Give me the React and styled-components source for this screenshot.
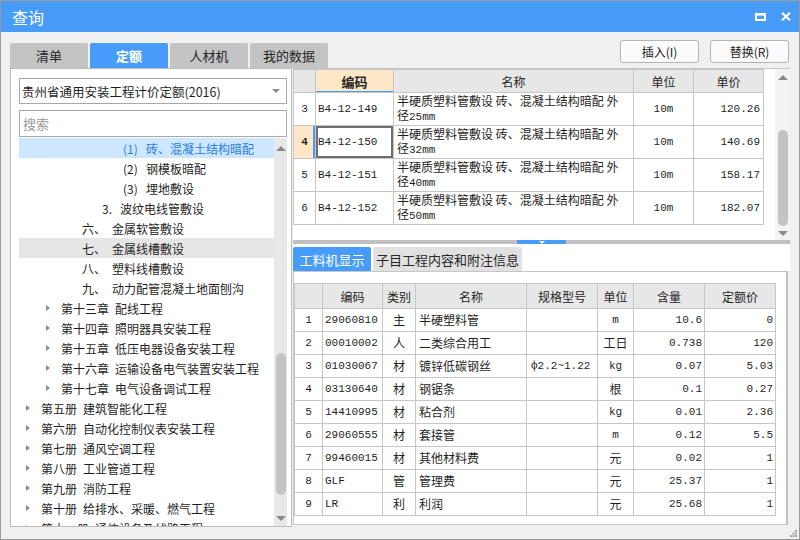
import React from 'react';
import styled, { createGlobalStyle } from 'styled-components';

const BLUE = '#469cf8';
const LINE = '#c6c6c6';
const MONO = '"Liberation Mono", "Noto Sans CJK SC", monospace';

const GlobalStyle = createGlobalStyle`
  html, body { margin: 0; padding: 0; background: #fff; }
  body {
    font-family: "Noto Sans CJK SC", "Noto Sans", sans-serif;
    font-size: 12px;
    color: #1f1f1f;
  }
  * { box-sizing: border-box; }
`;

const Window = styled.div`
  position: relative;
  width: 800px;
  height: 540px;
  border: 1px solid #9a9a9a;
  background: #f0f0f0;
  display: flex;
  flex-direction: column;
  overflow: hidden;
`;

const TitleBar = styled.div`
  flex: none;
  height: 31px;
  background: ${BLUE};
  color: #fff;
  display: flex;
  align-items: center;
  padding: 0 8px 0 11px;
`;

const Title = styled.div`
  flex: 1;
  font-size: 16px;
`;

const TitleIcons = styled.div`
  display: flex;
  align-items: center;
  gap: 15px;
`;

const Body = styled.div`
  flex: 1;
  min-height: 0;
  display: flex;
  flex-direction: column;
  padding: 8px 9px 12px 9px;
`;

const TopRow = styled.div`
  flex: none;
  height: 28px;
  display: flex;
`;

const Tabs = styled.div`
  display: flex;
  gap: 2px;
  align-self: flex-end;
`;

const Tab = styled.div`
  width: ${p => p.$w || 78}px;
  height: ${p => p.$h || 25}px;
  border-radius: 2px 2px 0 0;
  background: ${p => (p.$active ? BLUE : p.$bg || '#c4c4c4')};
  color: ${p => (p.$active ? '#fff' : '#262626')};
  font-weight: ${p => (p.$bold ? 700 : 400)};
  font-size: 13px;
  display: flex;
  align-items: center;
  justify-content: center;
`;

const Actions = styled.div`
  margin-left: auto;
  margin-right: 1px;
  display: flex;
  gap: 11px;
  align-self: flex-start;
`;

const Button = styled.button`
  width: 79px;
  height: 23px;
  border: 1px solid #b4b4b4;
  border-radius: 3px;
  background: #fbfbfb;
  font-family: inherit;
  font-size: 12px;
  color: #222;
  padding: 0;
`;

const Main = styled.div`
  flex: 1;
  min-height: 0;
  display: flex;
`;

const LeftPanel = styled.div`
  flex: none;
  width: 282px;
  background: #fff;
  border: 1px solid #bcbcbc;
  display: flex;
  flex-direction: column;
  padding: 9px 4px 0 8px;
`;

const Select = styled.div`
  flex: none;
  height: 26px;
  border: 1px solid #a8a8a8;
  display: flex;
  align-items: center;
  padding: 0 6px 0 2px;
  font-size: 12.5px;
  white-space: nowrap;
  span { flex: 1; }
  &::after {
    content: '';
    border-left: 4px solid transparent;
    border-right: 4px solid transparent;
    border-top: 4px solid #8a8a8a;
  }
`;

const Search = styled.div`
  flex: none;
  margin-top: 6px;
  height: 27px;
  border: 1px solid #a8a8a8;
  display: flex;
  align-items: center;
  padding-left: 3px;
  color: #9a9a9a;
  font-size: 13px;
`;

const Tree = styled.div`
  flex: 1;
  min-height: 0;
  margin-top: 1px;
  display: flex;
`;

const TreeList = styled.div`
  flex: 1;
  overflow: hidden;
`;

const TreeRow = styled.div`
  height: 20px;
  display: flex;
  align-items: center;
  white-space: nowrap;
  padding-left: ${p => p.$indent}px;
  background: ${p => (p.$selected ? '#cce7ff' : p.$hover ? '#e6e6e6' : 'transparent')};
  color: ${p => (p.$selected ? '#2b7de0' : '#1f1f1f')};
`;

const Expander = styled.span`
  flex: none;
  width: 15px;
  display: flex;
  align-items: center;
  &::before {
    content: '';
    border-top: 3.5px solid transparent;
    border-bottom: 3.5px solid transparent;
    border-left: 4px solid #8c8c8c;
  }
`;

const Prefix = styled.span`
  flex: none;
  min-width: ${p => p.$w}px;
`;

const ScrollBar = styled.div`
  flex: none;
  width: ${p => p.$w}px;
  background: ${p => p.$bg};
  display: flex;
  flex-direction: column;
  align-items: center;
`;

const ScrollArrow = styled.div`
  flex: none;
  width: 100%;
  height: ${p => p.$h}px;
  display: flex;
  align-items: center;
  justify-content: center;
  &::before {
    content: '';
    border-left: 5px solid transparent;
    border-right: 5px solid transparent;
    ${p => (p.$down ? 'border-top: 5px solid #8a8a8a;' : 'border-bottom: 5px solid #8a8a8a;')}
  }
`;

const ScrollBody = styled.div`
  flex: 1;
  width: 100%;
  display: flex;
  justify-content: center;
  padding-top: ${p => p.$offset}px;
`;

const Thumb = styled.div`
  width: 10px;
  height: ${p => p.$h}px;
  border-radius: 5px;
  background: #c3c3c3;
`;

const RightPanel = styled.div`
  flex: 1;
  min-width: 0;
  margin-left: 1px;
  display: flex;
  flex-direction: column;
`;

const TopArea = styled.div`
  flex: none;
  height: 172px;
  background: #fff;
  border-top: 1px solid ${LINE};
  display: flex;
`;

const GridWrap = styled.div`
  flex: 1;
  overflow: hidden;
`;

const Table = styled.table`
  border-collapse: collapse;
  table-layout: fixed;
  width: ${p => p.$w}px;
  font-size: 12px;
`;

const Th = styled.th`
  height: ${p => p.$h}px;
  border: 1px solid ${LINE};
  background: ${p => (p.$active ? '#fee7c6' : '#e7e7e7')};
  font-weight: ${p => (p.$active ? 700 : 400)};
  font-size: ${p => (p.$active ? 13 : 12)}px;
  color: #262626;
  padding: 0;
  box-shadow: ${p => (p.$active ? `inset 0 -1px 0 ${BLUE}` : 'none')};
`;

const Td = styled.td`
  height: ${p => p.$h}px;
  border: 1px solid ${LINE};
  padding: 0 ${p => p.$pr ?? 3}px 0 ${p => p.$pl ?? 3}px;
  text-align: ${p => p.$align || 'left'};
  font-family: ${p => (p.$mono ? MONO : 'inherit')};
  font-size: ${p => (p.$mono ? 11 : 12)}px;
  font-weight: ${p => (p.$bold ? 700 : 400)};
  line-height: 14px;
  background: ${p => (p.$mark ? '#fee7c6' : '#fff')};
  box-shadow: ${p => (p.$focus ? 'inset 0 0 0 2px #6f6f6f' : p.$mark ? `inset -2px 0 0 ${BLUE}` : 'none')};
  white-space: ${p => (p.$wrap ? 'normal' : 'nowrap')};
  overflow: hidden;
`;

const Size = styled.span`
  font-family: ${MONO};
  font-size: 11px;
`;

const Splitter = styled.div`
  flex: none;
  height: 4px;
  background: #c0c0c0;
  display: flex;
  justify-content: center;
`;

const SplitHandle = styled.div`
  width: 49px;
  background: ${BLUE};
  display: flex;
  justify-content: center;
  padding-top: 1px;
  &::before {
    content: '';
    border-left: 3px solid transparent;
    border-right: 3px solid transparent;
    border-top: 3px solid #fff;
  }
`;

const SubTabs = styled.div`
  flex: none;
  height: 27px;
  background: #fff;
  padding-top: 3px;
  display: flex;
  gap: 2px;
`;

const BottomPanel = styled.div`
  flex: 1;
  min-height: 0;
  background: #fff;
  border: 1px solid ${LINE};
  border-right: 2px solid #c2c2c2;
  margin: 0 2px 2px 0;
  padding-top: 11px;
  overflow: hidden;
`;

const Grip = styled.svg`
  position: absolute;
  right: 2px;
  bottom: 2px;
`;

const treeRows = [
  { indent: 104, prefix: '(1)', pw: 23, label: '砖、混凝土结构暗配', selected: true },
  { indent: 104, prefix: '(2)', pw: 23, label: '钢模板暗配' },
  { indent: 104, prefix: '(3)', pw: 23, label: '埋地敷设' },
  { indent: 83, prefix: '3.', pw: 18, label: '波纹电线管敷设' },
  { indent: 63, prefix: '六、', pw: 30, label: '金属软管敷设' },
  { indent: 63, prefix: '七、', pw: 30, label: '金属线槽敷设', hover: true },
  { indent: 63, prefix: '八、', pw: 30, label: '塑料线槽敷设' },
  { indent: 63, prefix: '九、', pw: 30, label: '动力配管混凝土地面刨沟' },
  { indent: 27, arrow: true, prefix: '第十三章', pw: 54, label: '配线工程' },
  { indent: 27, arrow: true, prefix: '第十四章', pw: 54, label: '照明器具安装工程' },
  { indent: 27, arrow: true, prefix: '第十五章', pw: 54, label: '低压电器设备安装工程' },
  { indent: 27, arrow: true, prefix: '第十六章', pw: 54, label: '运输设备电气装置安装工程' },
  { indent: 27, arrow: true, prefix: '第十七章', pw: 54, label: '电气设备调试工程' },
  { indent: 7, arrow: true, prefix: '第五册', pw: 42, label: '建筑智能化工程' },
  { indent: 7, arrow: true, prefix: '第六册', pw: 42, label: '自动化控制仪表安装工程' },
  { indent: 7, arrow: true, prefix: '第七册', pw: 42, label: '通风空调工程' },
  { indent: 7, arrow: true, prefix: '第八册', pw: 42, label: '工业管道工程' },
  { indent: 7, arrow: true, prefix: '第九册', pw: 42, label: '消防工程' },
  { indent: 7, arrow: true, prefix: '第十册', pw: 42, label: '给排水、采暖、燃气工程' },
  { indent: 7, arrow: true, prefix: '第十一册', pw: 54, label: '通信设备及线路工程' },
];

const quotaRows = [
  { no: 3, code: 'B4-12-149', size: '25mm', unit: '10m', price: '120.26' },
  { no: 4, code: 'B4-12-150', size: '32mm', unit: '10m', price: '140.69', selected: true },
  { no: 5, code: 'B4-12-151', size: '40mm', unit: '10m', price: '158.17' },
  { no: 6, code: 'B4-12-152', size: '50mm', unit: '10m', price: '182.07' },
];

const materialRows = [
  ['1', '29060810', '主', '半硬塑料管', '', 'm', '10.6', '0'],
  ['2', '00010002', '人', '二类综合用工', '', '工日', '0.738', '120'],
  ['3', '01030067', '材', '镀锌低碳钢丝', 'ф2.2~1.22', 'kg', '0.07', '5.03'],
  ['4', '03130640', '材', '钢锯条', '', '根', '0.1', '0.27'],
  ['5', '14410995', '材', '粘合剂', '', 'kg', '0.01', '2.36'],
  ['6', '29060555', '材', '套接管', '', 'm', '0.12', '5.5'],
  ['7', '99460015', '材', '其他材料费', '', '元', '0.02', '1'],
  ['8', 'GLF', '管', '管理费', '', '元', '25.37', '1'],
  ['9', 'LR', '利', '利润', '', '元', '25.68', '1'],
];

const isLatin = s => /^[\x00-\x7f]+$/.test(s);

function QuotaGrid() {
  return (
    <Table $w={470}>
      <colgroup>
        <col style={{ width: 22 }} />
        <col style={{ width: 78 }} />
        <col style={{ width: 240 }} />
        <col style={{ width: 60 }} />
        <col style={{ width: 70 }} />
      </colgroup>
      <thead>
        <tr>
          <Th $h={23} />
          <Th $h={23} $active>编码</Th>
          <Th $h={23}>名称</Th>
          <Th $h={23}>单位</Th>
          <Th $h={23}>单价</Th>
        </tr>
      </thead>
      <tbody>
        {quotaRows.map(r => (
          <tr key={r.no}>
            <Td $h={33} $align="center" $mono $pl={0} $pr={0} $mark={r.selected} $bold={r.selected}>{r.no}</Td>
            <Td $h={33} $mono $pl={2} $focus={r.selected}>{r.code}</Td>
            <Td $h={33} $wrap>半硬质塑料管敷设 砖、混凝土结构暗配 外径<Size>{r.size}</Size></Td>
            <Td $h={33} $align="center" $mono>{r.unit}</Td>
            <Td $h={33} $align="right" $mono>{r.price}</Td>
          </tr>
        ))}
      </tbody>
    </Table>
  );
}

function MaterialGrid() {
  const widths = [28, 60, 33, 111, 71, 36, 71, 71];
  const heads = ['', '编码', '类别', '名称', '规格型号', '单位', '含量', '定额价'];
  return (
    <Table $w={481}>
      <colgroup>
        {widths.map((w, i) => <col key={i} style={{ width: w }} />)}
      </colgroup>
      <thead>
        <tr>
          {heads.map((h, i) => <Th key={i} $h={25}>{h}</Th>)}
        </tr>
      </thead>
      <tbody>
        {materialRows.map(r => (
          <tr key={r[0]}>
            <Td $h={23} $align="center" $mono $pl={0} $pr={0}>{r[0]}</Td>
            <Td $h={23} $mono $pl={2}>{r[1]}</Td>
            <Td $h={23} $align="center">{r[2]}</Td>
            <Td $h={23}>{r[3]}</Td>
            <Td $h={23} $mono $pl={4}>{r[4]}</Td>
            <Td $h={23} $align="center" $mono={isLatin(r[5])}>{r[5]}</Td>
            <Td $h={23} $align="right" $mono $pr={2}>{r[6]}</Td>
            <Td $h={23} $align="right" $mono $pr={2}>{r[7]}</Td>
          </tr>
        ))}
      </tbody>
    </Table>
  );
}

export default function App() {
  return (
    <>
      <GlobalStyle />
      <Window>
        <TitleBar>
          <Title>查询</Title>
          <TitleIcons>
            <svg width="11" height="8" viewBox="0 0 11 8">
              <rect x="1" y="1.25" width="9" height="5.75" fill="none" stroke="#fff" strokeWidth="2" />
              <rect x="0" y="0" width="11" height="2.5" fill="#fff" />
            </svg>
            <svg width="10" height="9" viewBox="0 0 10 9">
              <path d="M1 0.8 L9 8.2 M9 0.8 L1 8.2" stroke="#fff" strokeWidth="2.2" />
            </svg>
          </TitleIcons>
        </TitleBar>
        <Body>
          <TopRow>
            <Tabs>
              <Tab>清单</Tab>
              <Tab $active $bold>定额</Tab>
              <Tab>人材机</Tab>
              <Tab>我的数据</Tab>
            </Tabs>
            <Actions>
              <Button>插入(I)</Button>
              <Button>替换(R)</Button>
            </Actions>
          </TopRow>
          <Main>
            <LeftPanel>
              <Select><span>贵州省通用安装工程计价定额(2016)</span></Select>
              <Search>搜索</Search>
              <Tree>
                <TreeList>
                  {treeRows.map((r, i) => (
                    <TreeRow key={i} $indent={r.indent} $selected={r.selected} $hover={r.hover}>
                      {r.arrow && <Expander />}
                      <Prefix $w={r.pw}>{r.prefix}</Prefix>
                      <span>{r.label}</span>
                    </TreeRow>
                  ))}
                </TreeList>
                <ScrollBar $w={13} $bg="#e8e8e8">
                  <ScrollArrow $h={20} />
                  <ScrollBody $offset={195}><Thumb $h={142} /></ScrollBody>
                  <ScrollArrow $h={16} $down />
                </ScrollBar>
              </Tree>
            </LeftPanel>
            <RightPanel>
              <TopArea>
                <GridWrap><QuotaGrid /></GridWrap>
                <ScrollBar $w={15} $bg="#f3f3f3">
                  <ScrollArrow $h={16} />
                  <ScrollBody $offset={45}><Thumb $h={96} /></ScrollBody>
                  <ScrollArrow $h={14} $down />
                </ScrollBar>
              </TopArea>
              <Splitter><SplitHandle /></Splitter>
              <SubTabs>
                <Tab $active $h={24}>工料机显示</Tab>
                <Tab $w={149} $h={24} $bg="#e1e1e1">子目工程内容和附注信息</Tab>
              </SubTabs>
              <BottomPanel>
                <MaterialGrid />
              </BottomPanel>
            </RightPanel>
          </Main>
        </Body>
        <Grip width="7" height="7" viewBox="0 0 7 7">
          <rect x="5" y="0" width="2" height="2" fill="#a8a8a8" />
          <rect x="2.5" y="2.5" width="2" height="2" fill="#a8a8a8" />
          <rect x="5" y="2.5" width="2" height="2" fill="#a8a8a8" />
          <rect x="0" y="5" width="2" height="2" fill="#a8a8a8" />
          <rect x="2.5" y="5" width="2" height="2" fill="#a8a8a8" />
          <rect x="5" y="5" width="2" height="2" fill="#a8a8a8" />
        </Grip>
      </Window>
    </>
  );
}
